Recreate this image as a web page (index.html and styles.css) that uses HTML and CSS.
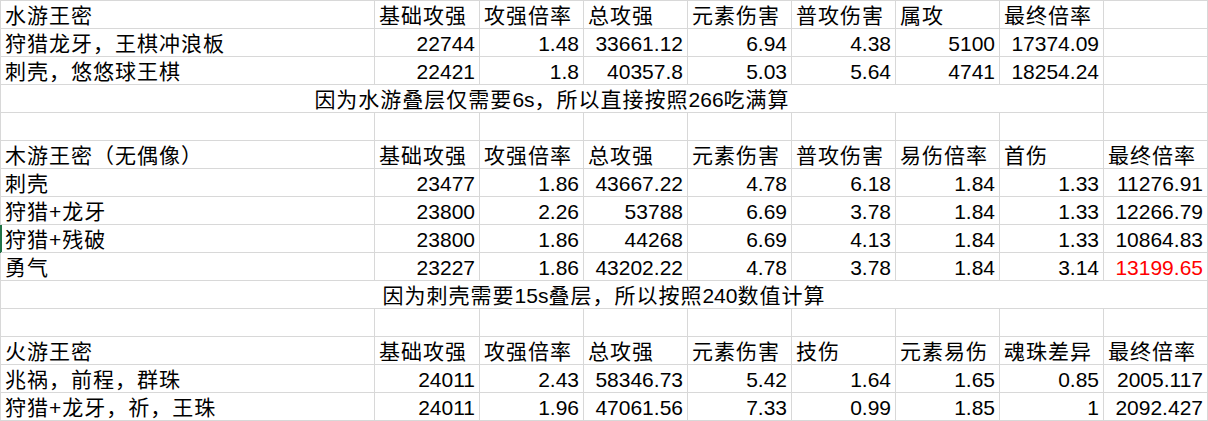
FILE: index.html
```html
<!DOCTYPE html>
<html lang="zh-CN">
<head>
<meta charset="utf-8">
<title>王密计算</title>
<link rel="stylesheet" href="styles.css">
</head>
<body>
<div class="sheet">
  <div class="c t">水游王密</div><div class="c t">基础攻强</div><div class="c t">攻强倍率</div><div class="c t">总攻强</div><div class="c t">元素伤害</div><div class="c t">普攻伤害</div><div class="c t">属攻</div><div class="c t">最终倍率</div><div class="c"></div>

  <div class="c t">狩猎龙牙，王棋冲浪板</div><div class="c n">22744</div><div class="c n">1.48</div><div class="c n">33661.12</div><div class="c n">6.94</div><div class="c n">4.38</div><div class="c n">5100</div><div class="c n">17374.09</div><div class="c"></div>

  <div class="c t">刺壳，悠悠球王棋</div><div class="c n">22421</div><div class="c n">1.8</div><div class="c n">40357.8</div><div class="c n">5.03</div><div class="c n">5.64</div><div class="c n">4741</div><div class="c n">18254.24</div><div class="c"></div>

  <div class="c t note span8">因为水游叠层仅需要<span class="lat">6s</span>，所以直接按照<span class="lat">266</span>吃满算</div><div class="c"></div>

  <div class="c"></div><div class="c"></div><div class="c"></div><div class="c"></div><div class="c"></div><div class="c"></div><div class="c"></div><div class="c"></div><div class="c"></div>

  <div class="c t">木游王密（无偶像）</div><div class="c t">基础攻强</div><div class="c t">攻强倍率</div><div class="c t">总攻强</div><div class="c t">元素伤害</div><div class="c t">普攻伤害</div><div class="c t">易伤倍率</div><div class="c t">首伤</div><div class="c t">最终倍率</div>

  <div class="c t">刺壳</div><div class="c n">23477</div><div class="c n">1.86</div><div class="c n">43667.22</div><div class="c n">4.78</div><div class="c n">6.18</div><div class="c n">1.84</div><div class="c n">1.33</div><div class="c n">11276.91</div>

  <div class="c t">狩猎+龙牙</div><div class="c n">23800</div><div class="c n">2.26</div><div class="c n">53788</div><div class="c n">6.69</div><div class="c n">3.78</div><div class="c n">1.84</div><div class="c n">1.33</div><div class="c n">12266.79</div>

  <div class="c t sel">狩猎+残破</div><div class="c n">23800</div><div class="c n">1.86</div><div class="c n">44268</div><div class="c n">6.69</div><div class="c n">4.13</div><div class="c n">1.84</div><div class="c n">1.33</div><div class="c n">10864.83</div>

  <div class="c t">勇气</div><div class="c n">23227</div><div class="c n">1.86</div><div class="c n">43202.22</div><div class="c n">4.78</div><div class="c n">3.78</div><div class="c n">1.84</div><div class="c n">3.14</div><div class="c n red">13199.65</div>

  <div class="c t note span9">因为刺壳需要<span class="lat">15s</span>叠层，所以按照<span class="lat">240</span>数值计算</div>

  <div class="c"></div><div class="c"></div><div class="c"></div><div class="c"></div><div class="c"></div><div class="c"></div><div class="c"></div><div class="c"></div><div class="c"></div>

  <div class="c t">火游王密</div><div class="c t">基础攻强</div><div class="c t">攻强倍率</div><div class="c t">总攻强</div><div class="c t">元素伤害</div><div class="c t">技伤</div><div class="c t">元素易伤</div><div class="c t">魂珠差异</div><div class="c t">最终倍率</div>

  <div class="c t">兆祸，前程，群珠</div><div class="c n">24011</div><div class="c n">2.43</div><div class="c n">58346.73</div><div class="c n">5.42</div><div class="c n">1.64</div><div class="c n">1.65</div><div class="c n">0.85</div><div class="c n">2005.117</div>

  <div class="c t">狩猎+龙牙，祈，王珠</div><div class="c n">24011</div><div class="c n">1.96</div><div class="c n">47061.56</div><div class="c n">7.33</div><div class="c n">0.99</div><div class="c n">1.85</div><div class="c n">1</div><div class="c n">2092.427</div>
</div>
</body>
</html>
```

FILE: styles.css
```css
html, body {
  margin: 0;
  padding: 0;
  background: #ffffff;
}

.sheet {
  display: grid;
  grid-template-columns: 374px 105px repeat(7, 104px);
  grid-auto-rows: 28px;
  border-top: 1px solid #d8d8d8;
  border-left: 1px solid #d8d8d8;
  width: 1208px;
  box-sizing: border-box;
  font-family: "Liberation Sans", "Noto Sans CJK SC", sans-serif;
  font-size: 21px;
  color: #000000;
}

.c {
  box-sizing: border-box;
  border-right: 1px solid #d8d8d8;
  border-bottom: 1px solid #d8d8d8;
  padding: 3px 4px 0 4px;
  line-height: 24px;
  white-space: nowrap;
  overflow: visible;
}

.t {
  text-align: left;
  letter-spacing: 1px;
}

.n {
  text-align: right;
}

.note {
  text-align: center;
}

.lat {
  letter-spacing: 0;
}

.span8 {
  grid-column: span 8;
}

.span9 {
  grid-column: span 9;
}

.red {
  color: #ff0000;
}

.sel {
  box-shadow: -1px 0 0 #217346, inset 1px 0 0 #217346;
}
```
